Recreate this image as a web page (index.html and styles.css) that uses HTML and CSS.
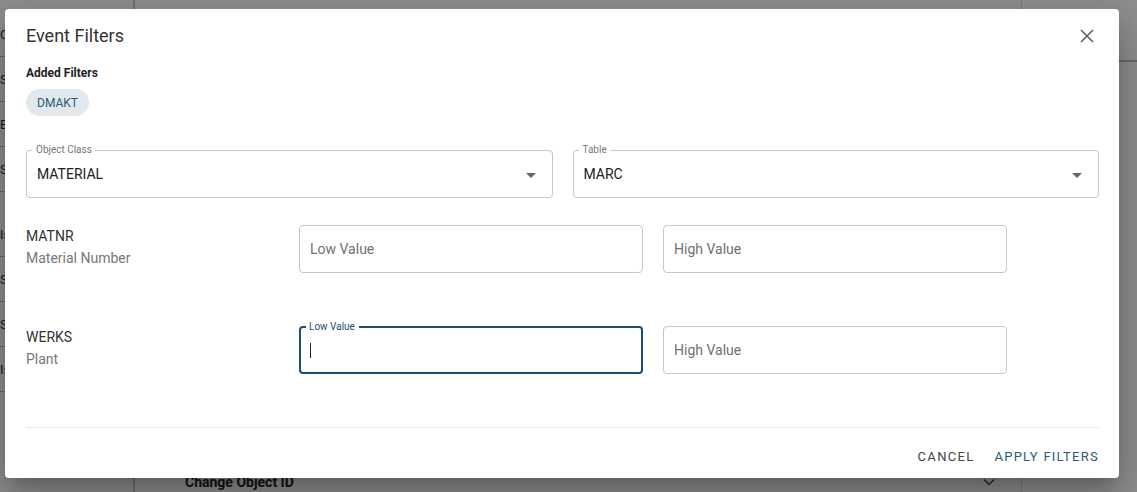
FILE: index.html
```html
<!DOCTYPE html>
<html lang="en">
<head>
<meta charset="utf-8">
<title>Event Filters</title>
<link rel="stylesheet" href="styles.css">
</head>
<body>
<div class="page">
  <aside class="side">
    <div class="side-item">Ob</div>
    <div class="side-item">Sta</div>
    <div class="side-item">Eff</div>
    <div class="side-item">Se</div>
    <div class="side-item gap">Is</div>
    <div class="side-item">Ser</div>
    <div class="side-item">Ser</div>
    <div class="side-item">Is</div>
  </aside>
  <div class="rail"></div>
  <main class="main">
    <div class="main-top"></div>
    <div class="main-bottom">
      <span class="acc-title">Change Object ID</span>
      <svg class="acc-chev" width="12" height="8" viewBox="0 0 12 8"><path d="M1 1.5 6 6.5 11 1.5" fill="none" stroke="#444" stroke-width="1.4"/></svg>
    </div>
  </main>
  <div class="right-col"></div>
</div>

<div class="backdrop"></div>

<div class="dialog" role="dialog">
  <header class="dlg-head">
    <h2 class="dlg-title">Event Filters</h2>
    <button class="close-btn" aria-label="Close">
      <svg width="14" height="14" viewBox="0 0 14 14"><path d="M1 1 13 13M13 1 1 13" stroke="#5f5f5f" stroke-width="1.6" fill="none"/></svg>
    </button>
  </header>

  <section class="added">
    <div class="added-label">Added Filters</div>
    <div class="chips"><span class="chip">DMAKT</span></div>
  </section>

  <div class="selects">
    <div class="field select">
      <span class="notch-label">Object Class</span>
      <span class="field-value">MATERIAL</span>
      <span class="caret"></span>
    </div>
    <div class="field select">
      <span class="notch-label">Table</span>
      <span class="field-value">MARC</span>
      <span class="caret"></span>
    </div>
  </div>

  <div class="rows">
    <div class="row">
      <div class="row-label">
        <div class="code">MATNR</div>
        <div class="desc">Material Number</div>
      </div>
      <div class="field"><span class="placeholder">Low Value</span></div>
      <div class="field"><span class="placeholder">High Value</span></div>
    </div>
    <div class="row">
      <div class="row-label">
        <div class="code">WERKS</div>
        <div class="desc">Plant</div>
      </div>
      <div class="field focused">
        <span class="notch-label">Low Value</span>
        <span class="cursor"></span>
      </div>
      <div class="field"><span class="placeholder">High Value</span></div>
    </div>
  </div>

  <footer class="dlg-actions">
    <button class="btn btn-cancel">CANCEL</button>
    <button class="btn btn-apply">APPLY FILTERS</button>
  </footer>
</div>
</body>
</html>
```

FILE: styles.css
```css
* { box-sizing: border-box; }
html, body { margin: 0; padding: 0; }
body {
  width: 1137px;
  height: 492px;
  overflow: hidden;
  font-family: Roboto, "Liberation Sans", Arial, sans-serif;
  color: #222;
  background: #fff;
  position: relative;
}

/* background page */
.page {
  display: flex;
  height: 492px;
}
.side {
  width: 133px;
  display: flex;
  flex-direction: column;
  padding-top: 12px;
  font-size: 13px;
  color: #333;
}
.side-item {
  height: 45px;
  border-bottom: 1px solid #bbb;
  display: flex;
  align-items: center;
}
.side-item.gap { margin-top: 20px; }
.rail {
  width: 2px;
  background: #ccc;
}
.main {
  flex: 0 0 887px;
  display: flex;
  flex-direction: column;
  justify-content: space-between;
  border-right: 1px solid #ddd;
}
.main-bottom {
  display: flex;
  align-items: center;
  justify-content: space-between;
  padding: 0 26px 0 50px;
  height: 20px;
}
.acc-title {
  font-weight: 700;
  font-size: 14px;
  color: #222;
  line-height: 16px;
}
.right-col {
  flex: 1;
  border-top: 2px solid #bbb;
  margin-top: 60px;
}

.backdrop {
  position: absolute;
  inset: 0;
  background: rgba(0, 0, 0, 0.44);
}

/* dialog */
.dialog {
  position: absolute;
  top: 9px;
  left: 5px;
  width: 1114px;
  height: 469px;
  background: #fff;
  border-radius: 4px;
  box-shadow: 0 11px 15px -7px rgba(0,0,0,.2), 0 24px 38px 3px rgba(0,0,0,.14), 0 9px 46px 8px rgba(0,0,0,.12);
  padding: 15px 20px 0 21px;
  display: flex;
  flex-direction: column;
}
.dlg-head {
  display: flex;
  align-items: center;
  justify-content: space-between;
  height: 24px;
}
.dlg-title {
  margin: 0;
  font-size: 18px;
  font-weight: 400;
  color: #333;
  line-height: 24px;
}
.close-btn {
  border: 0;
  background: none;
  padding: 0;
  width: 24px;
  height: 24px;
  display: flex;
  align-items: center;
  justify-content: center;
  cursor: pointer;
}

.added { margin-top: 17px; }
.added-label {
  font-size: 12px;
  font-weight: 700;
  line-height: 16px;
  color: #222;
}
.chips { margin-top: 8px; display: flex; }
.chip {
  height: 27px;
  padding: 0 11px;
  border-radius: 14px;
  background: #e2e8ec;
  color: #2c5a78;
  font-size: 12px;
  display: inline-flex;
  align-items: center;
}

.selects {
  margin-top: 34px;
  display: grid;
  grid-template-columns: 1fr 1fr;
  gap: 20px;
}
.field {
  position: relative;
  height: 48px;
  border: 1px solid #c6c6c6;
  border-radius: 4px;
  display: flex;
  align-items: center;
  padding: 0 10px;
}
.notch-label {
  position: absolute;
  top: -7px;
  left: 5px;
  padding: 0 3px 0 4px;
  background: #fff;
  font-size: 10px;
  line-height: 12px;
  color: #777;
}
.field-value {
  font-size: 14px;
  color: #222;
}
.caret {
  position: absolute;
  right: 16px;
  top: 22px;
  width: 0;
  height: 0;
  border-left: 5px solid transparent;
  border-right: 5px solid transparent;
  border-top: 5px solid #666;
}
.placeholder {
  font-size: 14px;
  color: #707070;
}

.rows {
  margin-top: 27px;
  display: flex;
  flex-direction: column;
  gap: 53px;
}
.row {
  display: grid;
  grid-template-columns: 253px 344px 344px;
  gap: 20px;
}
.row-label { font-size: 14px; line-height: 22px; }
.code { color: #333; }
.desc { color: #777; }

.field.focused {
  border: 2px solid #1d4e6b;
  padding-left: 9px;
}
.field.focused .notch-label {
  color: #1d4e6b;
  top: -7px;
  left: 5px;
  padding: 0 4px 0 3px;
}
.cursor {
  width: 1px;
  height: 15px;
  background: #222;
  margin-top: 1px;
}

.dlg-actions {
  margin-top: 53px;
  border-top: 1px solid #e6e6e6;
  display: flex;
  justify-content: flex-end;
  align-items: center;
  gap: 8px;
  height: 51px;
  padding-top: 6px;
}
.btn {
  border: 0;
  background: none;
  font-family: inherit;
  font-size: 13px;
  letter-spacing: 1.3px;
  padding: 6px 0 6px 12px;
  cursor: pointer;
}
.btn-cancel { color: #444; }
.btn-apply { color: #2c5a78; letter-spacing: 1.25px; }
```
